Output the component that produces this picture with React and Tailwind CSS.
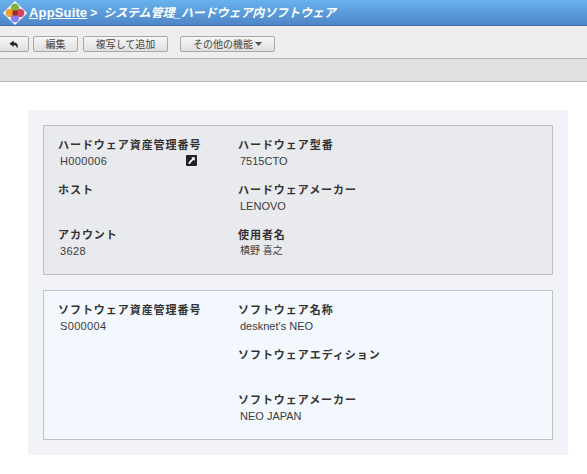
const jp = { fontFamily: '"Liberation Sans","Noto Sans CJK JP",sans-serif' };

function Field({ label, value, icon, small, num, h = "h-[45px]" }) {
  return (
    <div className={`${h} relative`}>
      <div className="text-[11px] leading-[14px] font-bold text-[#333] tracking-[0.95px] whitespace-nowrap">{label}</div>
      {value && <div className={`${small ? "text-[10px]" : num ? "text-[11px] tracking-[0.35px]" : "text-[11px]"} leading-[16px] text-[#3a3a3a] pl-[2px] mt-[1px] whitespace-nowrap`}>{value}</div>}
      {icon && (
        <div className="absolute left-[128px] top-[17px] w-[11px] h-[11px] bg-[#222] rounded-[1px] flex items-center justify-center">
          <svg width="9" height="9" viewBox="0 0 9 9"><path d="M4.2 1.3 H7.8 V4.9 L6.6 3.7 L4.4 5.9 C3.7 6.6 3.2 7.2 2.8 8 H1.4 C1.6 6.6 2.2 5.5 3.2 4.5 L5.4 2.5Z" fill="#fff" /></svg>
        </div>
      )}
    </div>
  );
}

function Btn({ children, w }) {
  return (
    <div className={`${w} h-[16px] shrink-0 border border-[#a8a8a8] rounded-[2px] bg-gradient-to-b from-[#f7f7f7] to-[#dfdfdf] flex items-center justify-center text-[10px] text-[#444] whitespace-nowrap`}>
      {children}
    </div>
  );
}

function Card({ bg, left, right }) {
  return (
    <div className={`h-[150px] border border-[#bfc1c6] ${bg} pl-[14px] pt-[12px] flex`}>
      <div className="w-[180px]">{left}</div>
      <div>{right}</div>
    </div>
  );
}

export default function App() {
  return (
    <div className="w-[587px] h-[474px] bg-white overflow-hidden" style={jp}>
      <div className="h-[26px] border-b border-[#3a6ea8] bg-gradient-to-b from-[#68b3ef] to-[#4f86c6] flex items-center pl-[3px]">
        <svg width="24" height="24" viewBox="0 0 24 24" className="shrink-0">
          <path d="M12 0.5 L23.5 12 L12 23.5 L0.5 12Z" fill="#fff" stroke="#fff" strokeWidth="1" strokeLinejoin="round" />
          <circle cx="12" cy="6.8" r="4.2" fill="#7cb342" />
          <circle cx="6.8" cy="12" r="4.2" fill="#f0a030" />
          <circle cx="17.2" cy="12" r="4.2" fill="#d8435f" />
          <circle cx="12" cy="17.2" r="4.2" fill="#8a80e8" />
          <rect x="9.5" y="9.5" width="5" height="5" fill="#a8281c" />
        </svg>
        <span className="ml-[2px] text-[13px] leading-[16px] font-bold text-white underline tracking-[0.15px]">AppSuite</span>
        <span className="ml-[3px] text-[12px] font-bold text-white">&gt;</span>
        <span className="ml-[6px] text-[12px] font-bold italic text-white tracking-[-0.1px] whitespace-nowrap">システム管理_ハードウェア内ソフトウェア</span>
      </div>

      <div className="h-[33px] bg-[#eeeeee] border-b border-[#b5b5b5] flex items-center pt-[4px]">
        <div className="w-[30px] h-[16px] shrink-0 -ml-[1px] border border-[#a8a8a8] rounded-[2px] bg-gradient-to-b from-[#f7f7f7] to-[#dfdfdf] flex items-center justify-center">
          <svg width="10" height="9" viewBox="0 0 10 9"><path d="M4.6 0.5 L0.5 3.8 L4.6 7 L4.6 4.9 C6.6 4.9 7.6 5.8 8.2 8.5 C9.6 5 8.4 2.6 4.6 2.6Z" fill="#222" /></svg>
        </div>
        <div className="ml-[4px]"><Btn w="w-[45px]">編集</Btn></div>
        <div className="ml-[5px]"><Btn w="w-[85px]">複写して追加</Btn></div>
        <div className="ml-[12px]">
          <Btn w="w-[95px]">
            その他の機能
            <svg width="7" height="4" viewBox="0 0 7 4" className="ml-[2px]"><path d="M0 0H7L3.5 4Z" fill="#555" /></svg>
          </Btn>
        </div>
      </div>

      <div className="h-[23px] bg-[#e0e0e0] border-b border-[#b9b9b9]" />

      <div className="mt-[28px] mx-[28px] w-[540px] h-[345px] bg-[#f2f3f8] p-[15px] flex flex-col gap-[15px]">
        <Card
          bg="bg-[#e9eaee]"
          left={<>
            <Field label="ハードウェア資産管理番号" value="H000006" icon num />
            <Field label="ホスト" />
            <Field label="アカウント" value="3628" num />
          </>}
          right={<>
            <Field label="ハードウェア型番" value="7515CTO" />
            <Field label="ハードウェアメーカー" value="LENOVO" />
            <Field label="使用者名" value="槙野 喜之" small />
          </>}
        />
        <Card
          bg="bg-[#f2f8fe]"
          left={<Field label="ソフトウェア資産管理番号" value="S000004" num />}
          right={<>
            <Field label="ソフトウェア名称" value="desknet's NEO" />
            <Field label="ソフトウェアエディション" />
            <Field label="ソフトウェアメーカー" value="NEO JAPAN" />
          </>}
        />
      </div>
    </div>
  );
}
